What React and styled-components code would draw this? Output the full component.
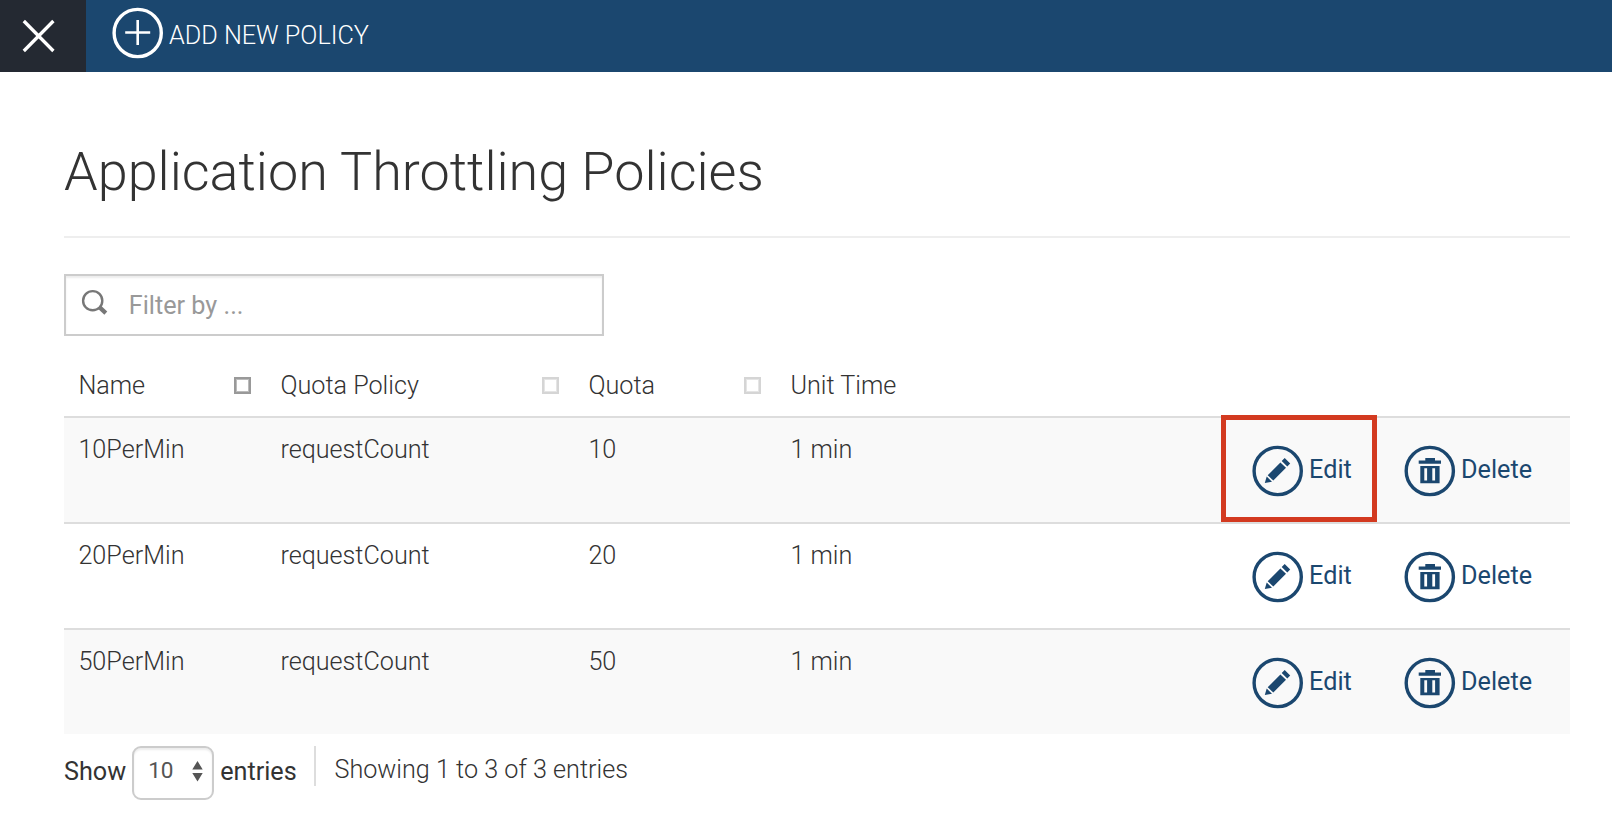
import React from "react";
import styled, { createGlobalStyle } from "styled-components";

const GlobalStyle = createGlobalStyle`
  * { box-sizing: border-box; }
  body {
    margin: 0;
    background: #fff;
    color: #333;
    font: 300 25.2px/37px Roboto, "Liberation Sans", sans-serif;
  }
  button, input { font: inherit; color: inherit; }
`;

const TopBar = styled.header`
  display: flex;
  height: 72px;
  background: #1b476f;
  color: #fff;
`;

const CloseButton = styled.button`
  display: flex;
  align-items: flex-start;
  width: 86px;
  padding: 19px 0 0 22px;
  border: 0;
  background: #242932;
`;

const AddButton = styled.button`
  display: flex;
  align-items: flex-start;
  padding: 7px 0 0 25px;
  border: 0;
  background: none;
`;

const AddLabel = styled.span`
  margin: 10px 0 0 6px;
  line-height: 37px;
`;

const Page = styled.main`
  width: 1506px;
  margin-left: 64px;
  padding-top: 68px;
`;

const Title = styled.h1`
  height: 98px;
  margin: 0;
  border-bottom: 2px solid #eee;
  font-size: 53.95px;
  font-weight: 300;
  line-height: 63px;
`;

const SearchBox = styled.label`
  display: flex;
  width: 540px;
  height: 62px;
  margin: 36px 0 31px;
  padding: 11px 0 0 14px;
  border: 2px solid #ccc;
  box-shadow: inset 0 2px 2px rgba(0, 0, 0, 0.075);
`;

const SearchInput = styled.input`
  width: 440px;
  height: 37px;
  margin-left: 20.8px;
  padding: 0;
  border: 0;
  outline: 0;
  background: none;
  font-size: 25.2px;
  font-weight: 400;
  line-height: 37px;
  &::placeholder { color: #999; opacity: 1; }
`;

const Row = styled.div`
  display: grid;
  grid-template-columns: 202px 308px 202px 446px 156px 192px;
`;

const HeadRow = styled(Row)`
  height: 49px;
`;

const BodyRow = styled(Row)`
  height: 106px;
  border-top: 2px solid #ddd;
  background: ${(p) => (p.$striped ? "#f9f9f9" : "#fff")};
`;

const HeadCell = styled.div`
  display: flex;
  justify-content: space-between;
  padding: 0 15px 0 14.4px;
`;

const SortBox = styled.span`
  width: 17px;
  height: 17px;
  margin-top: 10px;
  border: 2px solid ${(p) => (p.$active ? "#999" : "#d5d5d5")};
  box-shadow: inset 0 0 0 1px ${(p) => (p.$active ? "#bbb" : "#e5e5e5")};
`;

const Cell = styled.div`
  padding: 13px 0 0 14.4px;
`;

const ActionCell = styled.div`
  position: relative;
  display: flex;
  align-items: flex-start;
  padding: 27px 0 0 ${(p) => p.$indent}px;
  color: #1b476f;
  font-weight: 400;
`;

const ActionLabel = styled.span`
  margin: 6px 0 0 5.1px;
`;

const Highlight = styled.span`
  position: absolute;
  top: -3px;
  left: -1px;
  width: 156px;
  height: 107px;
  border: 5px solid #d33a20;
`;

const Footer = styled.footer`
  display: flex;
  align-items: flex-start;
  padding-top: 12px;
`;

const LengthLabel = styled.span`
  padding-top: 7px;
  font-weight: 400;
`;

const LengthSelect = styled.button`
  display: flex;
  justify-content: space-between;
  width: 82px;
  height: 54px;
  margin: 0 6px 0 6px;
  padding: 9px 9px 0 14px;
  border: 2px solid #ccc;
  border-radius: 9px;
  background: #fff;
  box-shadow: inset 0 2px 2px rgba(0, 0, 0, 0.075);
  color: #555;
  font-size: 22.6px;
  font-weight: 400;
  line-height: 27px;
`;

const Info = styled.div`
  height: 40px;
  margin-left: 17.8px;
  padding: 5px 0 0 18px;
  border-left: 2px solid #ddd;
`;

const CloseIcon = () => (
  <svg width="33" height="34" viewBox="0 0 33 34" fill="none" stroke="#fff" strokeWidth="3.3">
    <path d="M1.8 2L31.4 32M31.4 2L1.8 32" />
  </svg>
);

const PlusIcon = () => (
  <svg width="52" height="52" viewBox="0 0 52 52" fill="none" stroke="#fff">
    <circle cx="26.7" cy="26" r="23.6" strokeWidth="3.4" />
    <path d="M14.2 25.5h25M26.7 13v25" strokeWidth="2.6" />
  </svg>
);

const SearchIcon = () => (
  <svg width="28" height="28" viewBox="0 0 28 28" fill="none" stroke="#777">
    <circle cx="12.7" cy="12.7" r="9.6" strokeWidth="2.4" />
    <path d="M19.4 19.1L25.8 25.1" strokeWidth="4.2" />
  </svg>
);

const PencilIcon = () => (
  <svg width="52" height="52" viewBox="0 0 52 52" fill="#1b476f">
    <circle cx="25.7" cy="26" r="23.6" fill="none" stroke="#1b476f" strokeWidth="3.4" />
    <path d="M12.8 38L14.7 31.4L20 36.7ZM15.7 30.3L28.4 17.4L34 22.8L21.3 35.6ZM29.7 16.1L32.7 13L38.2 18.4L35.3 21.5Z" />
  </svg>
);

const TrashIcon = () => (
  <svg width="52" height="52" viewBox="0 0 52 52" fill="#1b476f">
    <circle cx="25.8" cy="26" r="23.6" fill="none" stroke="#1b476f" strokeWidth="3.4" />
    <path
      fillRule="evenodd"
      d="M21.3 13H31v2.4h6v3.3H14.7v-3.3h6.6ZM16.3 21h19.3v17.2H16.3ZM20.3 23.2v12.3h2.8V23.2ZM28.3 23.2v12.3h2.8V23.2Z"
    />
  </svg>
);

const ArrowsIcon = () => (
  <svg width="11" height="21" viewBox="0 0 11 21" fill="#555">
    <path d="M5.5 0L10.7 8.4H.3ZM5.5 20.4L10.7 12H.3Z" />
  </svg>
);

const IconSlot = styled.span`
  display: block;
  height: 28px;
  margin-top: 1px;
  line-height: 0;
`;

const ArrowSlot = styled.span`
  padding-top: 4px;
  line-height: 0;
`;

const policies = [
  { name: "10PerMin", quota: "10", highlighted: true },
  { name: "20PerMin", quota: "20" },
  { name: "50PerMin", quota: "50" },
];

export default function App() {
  return (
    <>
      <GlobalStyle />
      <TopBar>
        <CloseButton aria-label="Close"><CloseIcon /></CloseButton>
        <AddButton>
          <PlusIcon />
          <AddLabel>ADD NEW POLICY</AddLabel>
        </AddButton>
      </TopBar>
      <Page>
        <Title>Application Throttling Policies</Title>
        <SearchBox>
          <IconSlot><SearchIcon /></IconSlot>
          <SearchInput placeholder="Filter by ..." />
        </SearchBox>
        <HeadRow>
          <HeadCell>Name<SortBox $active /></HeadCell>
          <HeadCell>Quota Policy<SortBox /></HeadCell>
          <HeadCell>Quota<SortBox /></HeadCell>
          <HeadCell>Unit Time</HeadCell>
        </HeadRow>
        {policies.map((policy, i) => (
          <BodyRow key={policy.name} $striped={i % 2 === 0}>
            <Cell>{policy.name}</Cell>
            <Cell>requestCount</Cell>
            <Cell>{policy.quota}</Cell>
            <Cell>1 min</Cell>
            <ActionCell $indent={30}>
              <PencilIcon />
              <ActionLabel>Edit</ActionLabel>
              {policy.highlighted && <Highlight />}
            </ActionCell>
            <ActionCell $indent={26}>
              <TrashIcon />
              <ActionLabel>Delete</ActionLabel>
            </ActionCell>
          </BodyRow>
        ))}
        <Footer>
          <LengthLabel>Show</LengthLabel>
          <LengthSelect>
            10
            <ArrowSlot><ArrowsIcon /></ArrowSlot>
          </LengthSelect>
          <LengthLabel>entries</LengthLabel>
          <Info>Showing 1 to 3 of 3 entries</Info>
        </Footer>
      </Page>
    </>
  );
}
